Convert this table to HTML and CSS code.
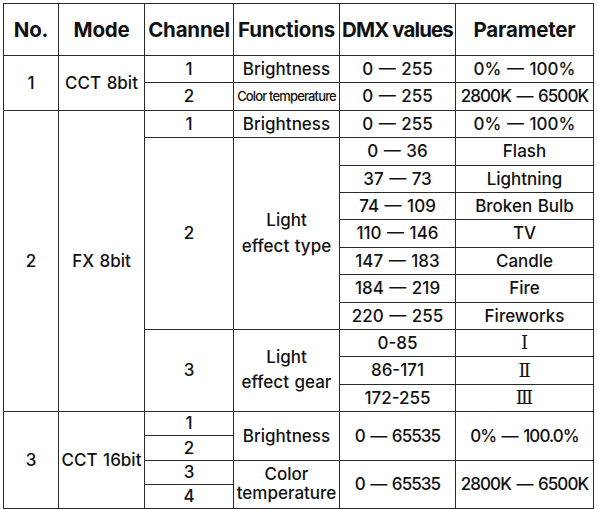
FILE: index.html
```html
<!DOCTYPE html>
<html>
<head>
<meta charset="utf-8">
<link rel="stylesheet" href="styles.css">
</head>
<body>
<table class="dmx">
  <colgroup>
    <col class="c-no"><col class="c-mode"><col class="c-ch"><col class="c-fn"><col class="c-val"><col class="c-par">
  </colgroup>
  <thead>
    <tr class="head">
      <th>No.</th><th>Mode</th><th>Channel</th><th>Functions</th><th class="narrow">DMX values</th><th>Parameter</th>
    </tr>
  </thead>
  <tbody>
    <tr class="r">
      <td rowspan="2">1</td><td rowspan="2">CCT 8bit</td><td>1</td><td>Brightness</td><td>0 — 255</td><td>0% — 100%</td>
    </tr>
    <tr class="r">
      <td>2</td><td class="tiny">Color temperature</td><td>0 — 255</td><td class="k">2800K — 6500K</td>
    </tr>
    <tr class="r">
      <td rowspan="11">2</td><td rowspan="11">FX 8bit</td><td>1</td><td>Brightness</td><td>0 — 255</td><td>0% — 100%</td>
    </tr>
    <tr class="r">
      <td rowspan="7">2</td><td rowspan="7" class="two">Light<br>effect type</td><td>0 — 36</td><td>Flash</td>
    </tr>
    <tr class="r"><td>37 — 73</td><td>Lightning</td></tr>
    <tr class="r"><td>74 — 109</td><td>Broken Bulb</td></tr>
    <tr class="r"><td>110 — 146</td><td>TV</td></tr>
    <tr class="r"><td>147 — 183</td><td>Candle</td></tr>
    <tr class="r"><td>184 — 219</td><td>Fire</td></tr>
    <tr class="r"><td>220 — 255</td><td>Fireworks</td></tr>
    <tr class="r">
      <td rowspan="3">3</td><td rowspan="3" class="two">Light<br>effect gear</td><td>0-85</td><td class="roman">Ⅰ</td>
    </tr>
    <tr class="r"><td>86-171</td><td class="roman">Ⅱ</td></tr>
    <tr class="r"><td>172-255</td><td class="roman">Ⅲ</td></tr>
    <tr class="s">
      <td rowspan="4">3</td><td rowspan="4">CCT 16bit</td><td class="sub">1</td><td rowspan="2">Brightness</td><td rowspan="2" class="k">0 — 65535</td><td rowspan="2" class="k">0% — 100.0%</td>
    </tr>
    <tr class="s"><td class="sub">2</td></tr>
    <tr class="s">
      <td class="sub">3</td><td rowspan="2" class="two tight">Color<br>temperature</td><td rowspan="2" class="k">0 — 65535</td><td rowspan="2" class="k">2800K — 6500K</td>
    </tr>
    <tr class="s"><td class="sub">4</td></tr>
  </tbody>
</table>
</body>
</html>
```

FILE: styles.css
```css
html, body {
  margin: 0;
  padding: 0;
  background: #ffffff;
}

body {
  padding: 3px 0 0 3px;
  font-family: "Inter", "Roboto", "Liberation Sans", sans-serif;
  color: #111111;
}

.dmx {
  border-collapse: collapse;
  table-layout: fixed;
  width: 590px;
  border: 1px solid #2a2a2a;
}

.c-no { width: 55px; }
.c-mode { width: 86px; }
.c-ch { width: 89px; }
.c-fn { width: 106px; }
.c-val { width: 116px; }
.c-par { width: 138px; }

.dmx th,
.dmx td {
  border: 1px solid #2a2a2a;
  padding: 0;
  text-align: center;
  vertical-align: middle;
  white-space: nowrap;
  overflow: hidden;
}

.dmx th {
  font-size: 20.5px;
  font-weight: 700;
  letter-spacing: -0.2px;
  line-height: 1.2;
  padding-top: 2px;
}

.dmx th.narrow {
  letter-spacing: -0.9px;
}

.dmx td {
  font-size: 17px;
  font-weight: 500;
  line-height: 1.2;
  word-spacing: 1px;
}

.head { height: 52px; }
.r { height: 27.4px; }
.s { height: 24.3px; }

.dmx td.tiny {
  font-size: 13px;
  letter-spacing: -0.85px;
  word-spacing: 0;
}

.dmx td.k {
  letter-spacing: -0.9px;
  word-spacing: 1.8px;
}

.dmx td.two {
  line-height: 1.5;
}

.dmx td.two.tight {
  line-height: 1.15;
}

.dmx td.sub {
  line-height: 1;
}

.dmx td.roman {
  font-family: "DejaVu Serif", "Liberation Serif", serif;
  font-size: 18px;
  font-weight: 400;
}
```
